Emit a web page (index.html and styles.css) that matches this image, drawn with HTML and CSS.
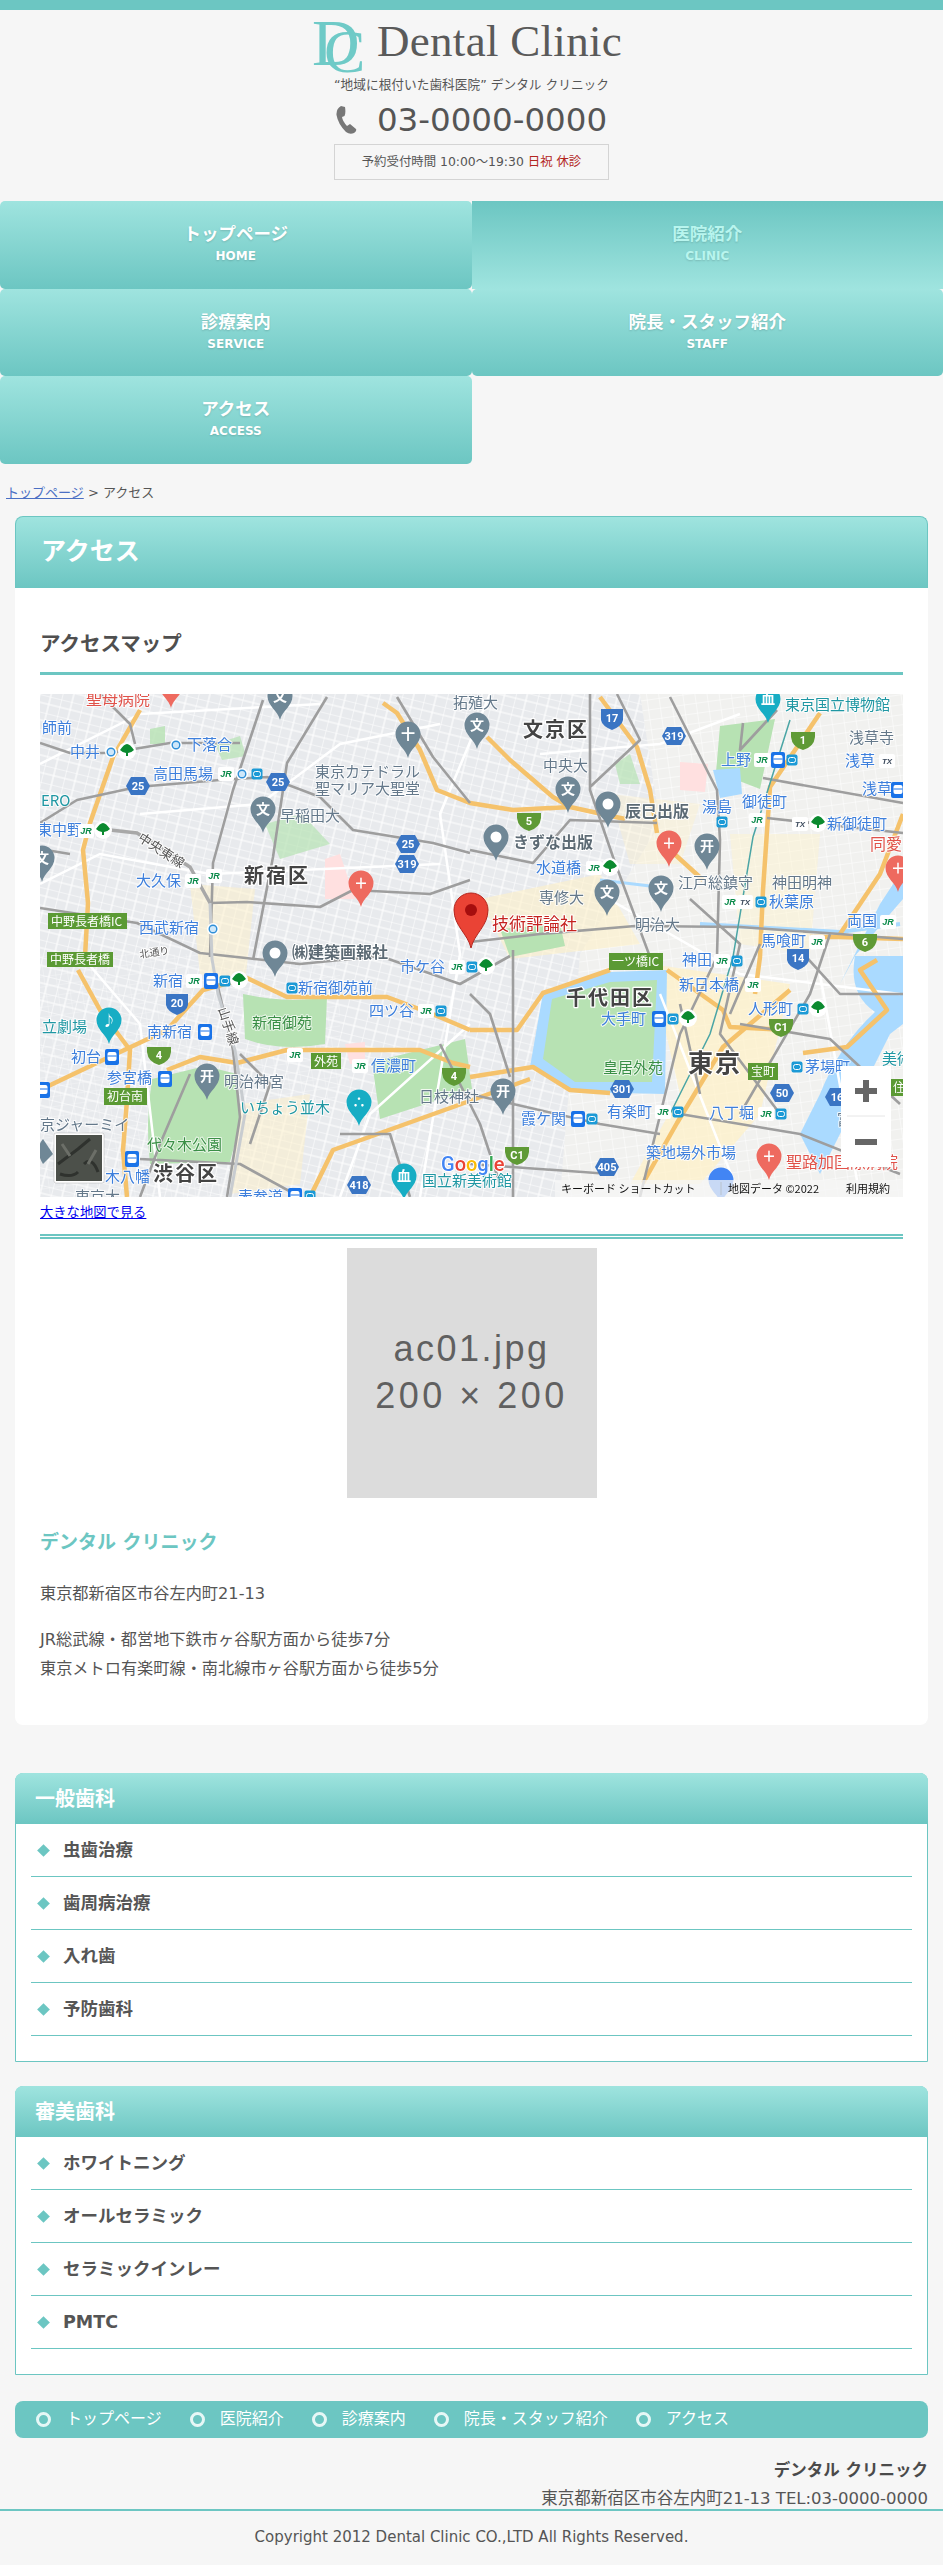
FILE: index.html
```html
<!DOCTYPE html>
<html lang="ja">
<head>
    <meta charset="UTF-8">
    <meta name="viewport" content="width=device-width, initial-scale=1.0">
    <title>アクセス | Dental Clinic</title>
    <link rel="stylesheet" href="styles.css">
</head>
<body>
    <header class="site-header">
        <a class="logo" href="#">
            <span class="logo-mark"><span class="logo-d">D</span><span class="logo-c">C</span></span>
            <span class="logo-name">Dental Clinic</span>
        </a>
        <p class="tagline">“地域に根付いた歯科医院” デンタル クリニック</p>
        <p class="phone">
            <svg class="phone-icon" viewBox="0 0 22 28"><path d="M5 0 L9 1 Q10 7 8.5 10 L6 11 Q6.5 15 11 20 L14 18 L20 23 Q21 25 18 27 Q14 29 10 26 Q2 18 .5 9 Q0 3 5 0Z"/></svg>
            <span>03-0000-0000</span>
        </p>
        <p class="hours">予約受付時間 10:00～19:30 <em>日祝 休診</em></p>
    </header>

    <nav class="global-nav">
        <a class="nav-item" href="#">トップページ<small>HOME</small></a>
        <a class="nav-item current" href="#">医院紹介<small>CLINIC</small></a>
        <a class="nav-item" href="#">診療案内<small>SERVICE</small></a>
        <a class="nav-item" href="#">院長・スタッフ紹介<small>STAFF</small></a>
        <a class="nav-item" href="#">アクセス<small>ACCESS</small></a>
    </nav>

    <p class="breadcrumb"><a href="#">トップページ</a> &gt; アクセス</p>

    <main class="wrapper">
        <section class="card">
            <h2 class="card-title">アクセス</h2>
            <div class="card-body">
                <h3 class="map-title">アクセスマップ</h3>

                <svg class="map" viewBox="0 0 863 503" xmlns="http://www.w3.org/2000/svg">
                    <defs>
                        <pattern id="streets" width="22" height="17" patternUnits="userSpaceOnUse" patternTransform="rotate(14)">
                            <path d="M0 0H22M0 8H22M0 0V17M11 0V17" fill="none" stroke="#fff" stroke-width="1.1"/>
                        </pattern>
                        <pattern id="streets-dense" width="12" height="10" patternUnits="userSpaceOnUse" patternTransform="rotate(-8)">
                            <path d="M0 0H12M0 0V10" fill="none" stroke="#fff" stroke-width="1"/>
                        </pattern>
                        <path id="pin" d="M0 0C-2-9-12.500-14-12.500-24A12.500 12.500 0 1 1 12.500-24C12.500-14 2-9 0 0Z"/>
                        <polygon id="hex" points="-12,0 -7,-9 7,-9 12,0 7,9 -7,9"/>
                        <path id="cup" d="M-12-8H12V-3Q11 7 0 10Q-11 7-12-3Z"/>
                        <g id="jr"><rect x="-8" y="-7" width="16" height="14" rx="2" fill="#fff"/><text class="jr-mark" y="3">JR</text></g>
                        <g id="tx"><rect x="-8" y="-7" width="16" height="14" rx="2" fill="#fff"/><text class="tx-mark" y="3">TX</text></g>
                        <g id="tree"><circle r="9" fill="#fff"/><path d="M-7-1Q-3-7 0-7Q3-7 7-1Q4 2 1 2V5H-1V2Q-4 2-7-1Z" fill="#0b8a2f"/></g>
                        <g id="metro"><rect x="-7" y="-8" width="14" height="16" rx="2" fill="#1a73e8"/><rect x="-4.500" y="-5" width="9" height="9" rx="2" fill="#fff"/><path d="M-4.500-1H4.500M-3 6L-4 7M3 6L4 7" stroke="#1a73e8"/></g>
                        <g id="sub"><rect x="-5.500" y="-5.500" width="11" height="11" rx="2" fill="#1c9ad6"/><rect x="-3.500" y="-2.500" width="7" height="5" rx="2" fill="none" stroke="#fff"/></g>
                        <g id="ring"><circle r="6" fill="#fff"/><circle r="3.800" fill="#cfe8fa" stroke="#2f8fd8" stroke-width="1.400"/></g>
                    </defs>

                    <!-- land, blocks -->
                    <rect width="863" height="503" fill="#e8eaed"/>
                    <rect width="863" height="503" fill="url(#streets)"/>
                    <path d="M600 0H863V503H520L540 260L620 130Z" fill="#f1f1ef"/>
                    <path d="M600 0H863V503H520L540 260L620 130Z" fill="url(#streets-dense)"/>
                    <path d="M0 260H300V400L180 503H0Z" fill="url(#streets-dense)" opacity=".5"/>

                    <!-- commercial areas -->
                    <g fill="#fff1c6" opacity=".7">
                        <path d="M610 270L750 290L720 420L660 490L590 490L640 400Z"/>
                        <path d="M150 190L215 195L205 290L160 280Z" opacity=".7"/>
                        <path d="M200 410L270 400L260 490L190 500Z" opacity=".7"/>
                        <path d="M440 205L560 180L600 250L470 265Z" opacity=".8"/>
                        <path d="M690 140L780 140L770 260L700 250Z" opacity=".6"/>
                        <path d="M570 100L660 110L640 170L590 170Z" opacity=".5"/>
                    </g>

                    <!-- parks and water -->
                    <g fill="#b7e2b3">
                        <path d="M203 300Q250 310 287 303L285 350Q240 358 205 345Z"/>
                        <path d="M112 385L165 372L197 380L200 430L190 468L110 470Q105 430 112 385Z"/>
                        <path d="M332 368L425 345L432 395L340 425Z"/>
                        <path d="M680 32L735 25L720 95L676 78Z"/>
                        <path d="M460 235L520 230L525 252L470 263Z"/>
                        <path d="M175 50L200 42L206 62L182 66Z" opacity=".7"/>
                        <path d="M225 130L262 120L290 150L240 165Z" opacity=".7"/>
                        <path d="M110 35L125 32L125 50L110 50Z" opacity=".8"/>
                        <path d="M575 70L590 60L600 90L580 90Z" opacity=".7"/>
                    </g>
                    <g fill="#ffe0e0">
                        <path d="M640 68L668 70L665 98L640 96Z"/>
                        <path d="M285 165L300 160L315 205L285 205Z"/>
                        <path d="M305 350L325 348L325 370L310 370Z"/>
                    </g>
                    <path d="M503 299L570 278L627 276L625 400L530 398L490 373Z" fill="#aadaff"/>
                    <path d="M512 305L570 288L617 286L612 388L535 388L503 365Z" fill="#b7e2b3"/>
                    <path d="M673 76L700 74L702 100L680 104Z" fill="#aadaff"/>
                    <path d="M863 262L815 262Q808 300 835 318Q800 350 780 400L760 440L780 480L820 400L850 340L863 330Z" fill="#aadaff"/>
                    <path d="M863 175L840 210L800 290L815 262L850 220L863 205Z" fill="#aadaff"/>
                    <path d="M660 230L800 238L860 230" fill="none" stroke="#aadaff" stroke-width="4"/>
                    <path d="M560 186L610 192" fill="none" stroke="#aadaff" stroke-width="3"/>

                    <!-- white roads -->
                    <g fill="none" stroke="#fff" stroke-width="2.500">
                        <path d="M0 70L100 20L280 10M0 190L60 160L170 180L400 170M100 120L220 110L300 50L400 30"/>
                        <path d="M450 0L400 120L420 260L380 503M300 503L330 420L430 330M40 260L100 330L120 503"/>
                        <path d="M500 60L620 50L700 20M560 200L700 280L860 300M620 300L700 503M780 280L820 503"/>
                    </g>

                    <!-- expressways -->
                    <g fill="none" stroke="#f5c26b" stroke-width="4.500" stroke-linejoin="round">
                        <path d="M100 16L73 63L50 129L43 156L48 209L45 263M38 276L60 316L90 356L87 406L83 456L87 503"/>
                        <path d="M343 9L357 19L380 56L397 96L430 109L473 116L530 113L585 125"/>
                        <path d="M447 43L470 66L513 103L530 113"/>
                        <path d="M560 3L580 30L597 53L610 96L617 139M630 156L663 186"/>
                        <path d="M780 19L730 93L723 196L720 263L715 300"/>
                        <path d="M430 336L477 336L503 299L570 276M627 276L683 316L690 333L747 336"/>
                        <path d="M430 383L493 373L530 396L570 399"/>
                        <path d="M0 396L63 366L127 336L163 296L207 284L247 303L347 303L390 319L430 336"/>
                        <path d="M127 376L160 363L197 369L247 356L380 356L413 369L430 373"/>
                        <path d="M270 503L293 456L413 413L490 385"/>
                        <path d="M603 489L637 429L683 353L750 296"/>
                        <path d="M837 266L820 276L847 316L807 353L763 359"/>
                        <path d="M863 245L800 243L770 243M863 120L840 180L800 240"/>
                    </g>

                    <!-- main roads -->
                    <g fill="none" stroke="#9e9e9e" stroke-width="2.600" stroke-linejoin="round">
                        <path d="M0 49L30 59L70 59L130 49L200 49"/>
                        <path d="M0 129L37 106L97 93L180 86L227 83L280 103L313 136L393 149L430 159"/>
                        <path d="M223 6L193 96L173 169L170 263M177 289L193 356L200 423L187 503"/>
                        <path d="M287 3L247 69L233 163L213 266"/>
                        <path d="M0 214L97 229L160 259L260 270L340 262L420 290L470 262"/>
                        <path d="M170 209L207 208L280 213L313 196L390 200L430 186"/>
                        <path d="M357 3L393 63L430 109M60 0L90 30L95 50"/>
                        <path d="M430 156L493 169L530 126L617 129M0 155L30 160"/>
                        <path d="M550 0L550 96L573 163L610 263M577 0L600 46L550 93"/>
                        <path d="M630 3L677 96L680 146L677 263L640 340L600 503"/>
                        <path d="M703 29L700 56L737 16M723 84L863 109M727 124L863 139"/>
                        <path d="M430 248L500 240L595 232L700 233L800 240L863 245"/>
                        <path d="M473 256V503M430 300L450 320L470 383M430 400L560 430L620 440M430 470L570 480"/>
                        <path d="M650 205L700 250L680 340L740 420M720 250L690 320M790 240L770 300L700 420"/>
                        <path d="M700 330L790 345L860 410M640 420L760 440L860 480M640 310L660 400"/>
                        <path d="M760 256L800 300L863 300M150 380L120 450L100 503M100 465L200 470L260 503"/>
                        <path d="M210 450L230 390L200 360M300 440L350 440L370 503M400 350L440 430L460 490"/>
                    </g>
                    <path d="M170 209L172 265L178 300L195 356L205 420L190 503" fill="none" stroke="#c8ccd0" stroke-width="3"/>
                    <path d="M70 136L97 139L150 173L170 209" fill="none" stroke="#a8a8a8" stroke-width="3.500"/>
                    <path d="M750 26L713 143L693 263L670 340L630 420" fill="none" stroke="#4aa5a5" stroke-width="1.500"/>

                    <!-- stations -->
                    <g class="station">
                        <text x="2" y="39">師前</text><text x="30" y="63">中井</text><text x="147" y="56">下落合</text>
                        <text x="113" y="85">高田馬場</text><text x="-3" y="141">東中野</text><text x="96" y="192">大久保</text>
                        <text x="99" y="239">西武新宿</text><text x="360" y="278">市ケ谷</text><text x="113" y="292">新宿</text>
                        <text x="258" y="299">新宿御苑前</text><text x="329" y="322">四ツ谷</text><text x="107" y="343">南新宿</text>
                        <text x="31" y="368">初台</text><text x="67" y="389">参宮橋</text><text x="331" y="377">信濃町</text>
                        <text x="65" y="488">木八幡</text><text x="198" y="508">表参道</text><text x="496" y="179">水道橋</text>
                        <text x="662" y="118">湯島</text><text x="702" y="113">御徒町</text><text x="681" y="71">上野</text>
                        <text x="805" y="72">浅草</text><text x="822" y="100">浅草</text><text x="787" y="135">新御徒町</text>
                        <text x="729" y="213">秋葉原</text><text x="807" y="232">両国</text><text x="721" y="252">馬喰町</text>
                        <text x="642" y="271">神田</text><text x="639" y="296">新日本橋</text><text x="561" y="330">大手町</text>
                        <text x="708" y="320">人形町</text><text x="765" y="378">茅場町</text><text x="481" y="430">霞ケ関</text>
                        <text x="567" y="423">有楽町</text><text x="669" y="424">八丁堀</text><text x="606" y="464">築地場外市場</text>
                    </g>

                    <g>
                        <use href="#ring" x="71" y="58"/><use href="#tree" x="87" y="57"/><use href="#ring" x="136" y="51"/>
                        <use href="#jr" x="186" y="80"/><use href="#ring" x="202" y="80"/><use href="#sub" x="217" y="80"/>
                        <use href="#jr" x="46" y="137"/><use href="#tree" x="63" y="136"/>
                        <use href="#jr" x="153" y="187"/><use href="#jr" x="174" y="182"/><use href="#ring" x="173" y="235"/>
                        <use href="#jr" x="417" y="273"/><use href="#sub" x="432" y="273"/><use href="#tree" x="446" y="272"/>
                        <use href="#jr" x="154" y="287"/><use href="#metro" x="171" y="287"/><use href="#sub" x="185" y="287"/><use href="#tree" x="199" y="286"/>
                        <use href="#sub" x="252" y="294"/><use href="#jr" x="386" y="317"/><use href="#sub" x="401" y="317"/>
                        <use href="#metro" x="165" y="338"/><use href="#metro" x="72" y="363"/><use href="#metro" x="125" y="385"/>
                        <use href="#metro" x="3" y="396"/><use href="#metro" x="92" y="465"/><use href="#jr" x="255" y="361"/>
                        <use href="#jr" x="320" y="372"/><use href="#metro" x="255" y="502"/><use href="#sub" x="270" y="502"/>
                        <use href="#jr" x="722" y="66"/><use href="#metro" x="738" y="66"/><use href="#sub" x="752" y="66"/>
                        <use href="#tx" x="847" y="67"/><use href="#metro" x="858" y="96"/><use href="#sub" x="682" y="128"/>
                        <use href="#jr" x="717" y="126"/><use href="#tx" x="760" y="130"/><use href="#tree" x="778" y="129"/>
                        <use href="#jr" x="554" y="174"/><use href="#tree" x="570" y="173"/>
                        <use href="#jr" x="690" y="208"/><use href="#tx" x="705" y="208"/><use href="#sub" x="721" y="208"/>
                        <use href="#jr" x="848" y="228"/><use href="#jr" x="777" y="248"/><use href="#jr" x="682" y="267"/><use href="#sub" x="697" y="267"/>
                        <use href="#jr" x="713" y="291"/><use href="#sub" x="763" y="315"/><use href="#tree" x="778" y="314"/>
                        <use href="#metro" x="619" y="325"/><use href="#sub" x="633" y="325"/><use href="#tree" x="648" y="324"/>
                        <use href="#sub" x="757" y="373"/><use href="#metro" x="538" y="425"/><use href="#sub" x="552" y="425"/>
                        <use href="#jr" x="623" y="418"/><use href="#sub" x="638" y="418"/><use href="#jr" x="726" y="420"/><use href="#sub" x="741" y="420"/>
                    </g>

                    <!-- landmarks -->
                    <g class="landmark">
                        <text x="275" y="83">東京カテドラル</text><text x="275" y="100">聖マリア大聖堂</text><text x="240" y="127">早稲田大</text>
                        <text x="413" y="14">拓殖大</text><text x="503" y="77">中央大</text><text x="499" y="209">専修大</text>
                        <text x="638" y="194">江戸総鎮守</text><text x="732" y="194">神田明神</text><text x="595" y="236">明治大</text>
                        <text x="809" y="49">浅草寺</text><text x="184" y="393">明治神宮</text><text x="379" y="408">日枝神社</text>
                        <text x="0" y="436">京ジャーミイ</text><text x="35" y="508">東京大</text><text x="797" y="431">富</text>
                    </g>
                    <g class="teal-label">
                        <text x="745" y="16">東京国立博物館</text><text x="1" y="112">ERO</text><text x="2" y="338">立劇場</text>
                        <text x="200" y="419">いちょう並木</text><text x="382" y="492">国立新美術館</text><text x="842" y="370">美術</text>
                    </g>
                    <g class="park-label">
                        <text x="212" y="334">新宿御苑</text><text x="107" y="456">代々木公園</text><text x="563" y="379">皇居外苑</text>
                    </g>
                    <g class="place-name">
                        <text x="473" y="154">きずな出版</text><text x="585" y="123">辰巳出版</text><text x="252" y="264">㈱建築画報社</text>
                    </g>
                    <g class="ward">
                        <text x="204" y="189">新宿区</text><text x="483" y="43">文京区</text><text x="526" y="311">千代田区</text><text x="113" y="487">渋谷区</text>
                    </g>
                    <text class="ward tokyo" x="648" y="378">東京</text>
                    <g class="hospital-label">
                        <text x="830" y="156">同愛</text><text x="746" y="474">聖路加国際病院</text>
                    </g>
                    <text class="hospital-label top" x="46" y="11">聖母病院</text>
                    <text class="rail-label" transform="translate(97 146) rotate(33)">中央東線</text>
                    <text class="rail-label" transform="translate(178 315) rotate(72)">山手線</text>
                    <text class="rail-label small" transform="translate(100 264) rotate(-8)">北通り</text>

                    <!-- green signs -->
                    <g class="sign">
                        <rect x="8" y="219" width="79" height="16"/><rect x="7" y="258" width="66" height="15"/>
                        <rect x="64" y="394" width="43" height="17"/><rect x="271" y="359" width="30" height="16"/>
                        <rect x="569" y="259" width="54" height="17"/><rect x="708" y="369" width="30" height="17"/><rect x="851" y="385" width="12" height="17"/>
                    </g>
                    <g class="sign-text">
                        <text x="11" y="232">中野長者橋IC</text><text x="10" y="270">中野長者橋</text><text x="67" y="407">初台南</text>
                        <text x="274" y="372">外苑</text><text x="572" y="272">一ツ橋IC</text><text x="711" y="382">宝町</text><text x="853" y="398">住</text>
                    </g>

                    <!-- route shields -->
                    <g class="route">
                        <use href="#hex" x="98" y="92"/><use href="#hex" x="238" y="88"/><use href="#hex" x="368" y="150"/><use href="#hex" x="367" y="170"/>
                        <use href="#hex" x="634" y="42"/><use href="#hex" x="582" y="395"/><use href="#hex" x="742" y="399"/><use href="#hex" x="797" y="403"/>
                        <use href="#hex" x="567" y="473"/><use href="#hex" x="319" y="491"/>
                        <path d="M561 15H583V26Q582 32 572 36Q562 32 561 26Z"/><path d="M126 300H148V311Q147 317 137 321Q127 317 126 311Z"/><path d="M747 255H769V266Q768 272 758 276Q748 272 747 266Z"/>
                    </g>
                    <g class="route-num">
                        <text x="98" y="96">25</text><text x="238" y="92">25</text><text x="368" y="154">25</text><text x="367" y="174">319</text>
                        <text x="634" y="46">319</text><text x="582" y="399">301</text><text x="742" y="403">50</text><text x="797" y="407">16</text>
                        <text x="567" y="477">405</text><text x="319" y="495">418</text><text x="572" y="28">17</text><text x="137" y="313">20</text><text x="758" y="268">14</text>
                    </g>
                    <g class="route-green">
                        <use href="#cup" x="489" y="127"/><use href="#cup" x="763" y="46"/><use href="#cup" x="825" y="248"/>
                        <use href="#cup" x="119" y="361"/><use href="#cup" x="414" y="382"/><use href="#cup" x="741" y="333"/><use href="#cup" x="477" y="461"/>
                    </g>
                    <g class="route-num">
                        <text x="489" y="131">5</text><text x="763" y="50">1</text><text x="825" y="252">6</text>
                        <text x="119" y="365">4</text><text x="414" y="386">4</text><text x="741" y="337">C1</text><text x="477" y="465">C1</text>
                    </g>

                    <!-- pins -->
                    <g class="pin-grey">
                        <g transform="translate(240 26)"><use href="#pin"/><text y="-19">文</text></g>
                        <g transform="translate(368 64)"><use href="#pin"/><text y="-19">十</text></g>
                        <g transform="translate(223 139)"><use href="#pin"/><text y="-19">文</text></g>
                        <g transform="translate(2 188)"><use href="#pin"/><text y="-19">文</text></g>
                        <g transform="translate(437 55)"><use href="#pin"/><text y="-19">文</text></g>
                        <g transform="translate(528 119)"><use href="#pin"/><text y="-19">文</text></g>
                        <g transform="translate(567 222)"><use href="#pin"/><text y="-19">文</text></g>
                        <g transform="translate(621 218)"><use href="#pin"/><text y="-19">文</text></g>
                        <g transform="translate(167 406)"><use href="#pin"/><text y="-19">开</text></g>
                        <g transform="translate(667 176)"><use href="#pin"/><text y="-19">开</text></g>
                        <g transform="translate(463 421)"><use href="#pin"/><text y="-19">开</text></g>
                        <g transform="translate(568 134)"><use href="#pin"/><circle cy="-24" r="5.500" fill="#fff"/></g>
                        <g transform="translate(456 167)"><use href="#pin"/><circle cy="-24" r="5.500" fill="#fff"/></g>
                        <g transform="translate(235 283)"><use href="#pin"/><circle cy="-24" r="5.500" fill="#fff"/></g>
                        <path d="M3 470Q-6 455 3 445L13 460Z"/>
                    </g>
                    <g class="pin-red">
                        <g transform="translate(131 14)"><use href="#pin"/></g>
                        <g transform="translate(321 213)"><use href="#pin"/><text y="-19">＋</text></g>
                        <g transform="translate(629 173)"><use href="#pin"/><text y="-19">＋</text></g>
                        <g transform="translate(858 198)"><use href="#pin"/><text y="-19">＋</text></g>
                        <g transform="translate(729 486)"><use href="#pin"/><text y="-19">＋</text></g>
                    </g>
                    <g class="pin-teal">
                        <g transform="translate(728 29)"><use href="#pin"/><text y="-19">血</text></g>
                        <g transform="translate(69 350)"><use href="#pin"/><text y="-19">♪</text></g>
                        <g transform="translate(319 432)"><use href="#pin"/><text y="-19">∴</text></g>
                        <g transform="translate(364 506)"><use href="#pin"/><text y="-19">血</text></g>
                    </g>
                    <g transform="translate(681 510)"><use href="#pin" fill="#4285f4"/></g>

                    <!-- selected place -->
                    <path d="M431 254C428 240 414 232 414 216A17 17 0 1 1 448 216C448 232 434 240 431 254Z" fill="#ea4335" stroke="#b3261e"/>
                    <circle cx="431" cy="216" r="6" fill="#a50e0e"/>
                    <text class="selected-label" x="452" y="236">技術評論社</text>

                    <!-- map chrome -->
                    <rect x="14" y="439" width="50" height="50" rx="2" fill="#fff" stroke="#00000022"/>
                    <rect x="16" y="441" width="46" height="46" fill="#4c504a"/>
                    <path d="M18 470L38 455L50 445M44 470Q52 462 58 478M20 480Q32 484 38 478" fill="none" stroke="#2f322e" stroke-width="3"/>
                    <path d="M22 450L30 462M48 470L56 456" fill="none" stroke="#6c6f68" stroke-width="3"/>
                    <text class="google" x="401" y="477"><tspan fill="#4285f4">G</tspan><tspan fill="#ea4335">o</tspan><tspan fill="#fbbc05">o</tspan><tspan fill="#4285f4">g</tspan><tspan fill="#34a853">l</tspan><tspan fill="#ea4335">e</tspan></text>

                    <rect x="801" y="372" width="50" height="101" fill="#fff"/>
                    <path d="M807 422H845" stroke="#e6e6e6"/>
                    <path d="M815 394H837V400H815ZM823 386H829V408H823ZM815 445H837V451H815Z" fill="#666"/>

                    <rect x="515" y="486" width="348" height="17" fill="#f5f5f5" opacity=".75"/>
                    <path d="M681 488V501" stroke="#b9c2cc"/>
                    <g class="attribution">
                        <text x="521" y="499">キーボード ショートカット</text><text x="688" y="499">地図データ ©2022</text><text x="806" y="499">利用規約</text>
                    </g>
                </svg>

                <a class="map-link" href="#">大きな地図で見る</a>
                <hr class="double-rule">

                <div class="photo"><span class="photo-name">ac01.jpg</span><span class="photo-size">200 × 200</span></div>

                <h4 class="clinic-name">デンタル クリニック</h4>
                <p class="address">東京都新宿区市谷左内町21-13</p>
                <p class="directions">JR総武線・都営地下鉄市ヶ谷駅方面から徒歩7分<br>東京メトロ有楽町線・南北線市ヶ谷駅方面から徒歩5分</p>
            </div>
        </section>

        <section class="side-box first">
            <h3 class="side-title">一般歯科</h3>
            <ul class="side-list">
                <li>虫歯治療</li>
                <li>歯周病治療</li>
                <li>入れ歯</li>
                <li>予防歯科</li>
            </ul>
        </section>

        <section class="side-box">
            <h3 class="side-title">審美歯科</h3>
            <ul class="side-list">
                <li>ホワイトニング</li>
                <li>オールセラミック</li>
                <li>セラミックインレー</li>
                <li>PMTC</li>
            </ul>
        </section>

        <ul class="foot-nav">
            <li>トップページ</li>
            <li>医院紹介</li>
            <li>診療案内</li>
            <li>院長・スタッフ紹介</li>
            <li>アクセス</li>
        </ul>
    </main>

    <footer class="site-footer">
        <div class="foot-info">
            <strong>デンタル クリニック</strong>
            <p>東京都新宿区市谷左内町21-13 TEL:03-0000-0000</p>
        </div>
        <p class="copyright">Copyright 2012 Dental Clinic CO.,LTD All Rights Reserved.</p>
    </footer>
</body>
</html>
```

FILE: styles.css
```css
* {
    margin: 0;
    padding: 0;
    box-sizing: border-box;
}

body {
    font-family: "DejaVu Sans", "Noto Sans CJK JP", sans-serif;
    background: #f6f6f6;
    color: #555;
    font-size: 16px;
}

ul {
    list-style: none;
}

/* Header */
.site-header {
    border-top: 10px solid #6cc6c2;
    height: 201px;
    display: flex;
    flex-direction: column;
    align-items: center;
}

.logo {
    display: flex;
    align-items: flex-start;
    height: 57px;
    margin: 5px 0 0 -9px;
    color: #5a5a5a;
    text-decoration: none;
}

.logo-mark {
    position: relative;
    width: 65px;
    height: 57px;
    font-family: "Liberation Serif", serif;
    color: #6fcac7;
}

.logo-d,
.logo-c {
    position: absolute;
    font-size: 66px;
    line-height: 60px;
}

.logo-d {
    left: 0;
    top: -2px;
}

.logo-c {
    left: 12px;
    top: 6px;
    font-size: 62px;
}

.logo-name {
    font-family: "Liberation Serif", serif;
    font-size: 45px;
    line-height: 52px;
    letter-spacing: .3px;
}

.tagline {
    font-size: 12.700px;
    line-height: 20px;
    margin-top: 3px;
}

.phone {
    display: flex;
    align-items: center;
    gap: 19px;
    height: 40px;
    margin-top: 5px;
    font-size: 32.500px;
    line-height: 40px;
}

.phone-icon {
    width: 22px;
    height: 28px;
    fill: #777;
}

.hours {
    width: 275px;
    height: 36px;
    margin-top: 4px;
    border: 1px solid #d4d4d4;
    font-size: 12.400px;
    line-height: 34px;
    text-align: center;
}

.hours em {
    font-style: normal;
    color: #b3261e;
}

/* Global nav */
.global-nav {
    display: grid;
    grid-template-columns: 1fr 1fr;
    grid-auto-rows: 87.500px;
}

.nav-item {
    display: block;
    padding-top: 22px;
    border-radius: 5px;
    background: linear-gradient(#9fe4df, #6cc6c2);
    color: #fff;
    font-size: 17.500px;
    font-weight: bold;
    line-height: 22px;
    text-align: center;
    text-decoration: none;
    text-shadow: 0 1px 2px rgba(0, 0, 0, .15);
}

.nav-item small {
    display: block;
    font-size: 12px;
    line-height: 22px;
}

.nav-item.current {
    border-radius: 0;
    background: linear-gradient(#6cc6c2, #9fe4df);
    color: #b8f5ee;
}

/* Breadcrumb */
.breadcrumb {
    height: 52px;
    padding: 20px 6px 0;
    font-size: 13px;
    line-height: 18px;
}

.breadcrumb a {
    color: #4a6fc4;
}

/* Main */
.wrapper {
    margin: 0 15px;
}

.card {
    height: 1209px;
    border-radius: 8px;
    background: #fff;
}

.card-title {
    height: 72px;
    padding-left: 25px;
    border: 1px solid #6cc6c2;
    border-bottom: 0;
    border-radius: 8px 8px 0 0;
    background: linear-gradient(#9fe4df, #6cc6c2);
    color: #fff;
    font-size: 25px;
    line-height: 70px;
}

.card-body {
    padding: 0 25px;
}

.map-title {
    height: 87px;
    padding-top: 41px;
    border-bottom: 3px solid #6cc6c2;
    font-size: 20.500px;
    line-height: 30px;
    color: #4f4f4f;
}

.map {
    display: block;
    width: 863px;
    height: 503px;
    margin-top: 19px;
    font-family: "Noto Sans CJK JP", sans-serif;
}

.map-link {
    display: block;
    margin-top: 7px;
    font-size: 13.300px;
    line-height: 18px;
    color: #00e;
}

.double-rule {
    height: 5px;
    margin-top: 12px;
    border: 0;
    border-bottom: 5px double #6cc6c2;
}

.photo {
    display: flex;
    flex-direction: column;
    justify-content: center;
    width: 250px;
    height: 250px;
    margin: 9px auto 0;
    padding-bottom: 1px;
    background: #dcdcdc;
    color: #606060;
    font-family: "Liberation Sans", sans-serif;
    font-size: 36px;
    line-height: 47px;
    text-align: center;
}

.photo-name {
    letter-spacing: 2.500px;
}

.photo-size {
    letter-spacing: 3.500px;
}

.clinic-name {
    margin-top: 30px;
    color: #6cc6c2;
    font-size: 19px;
    line-height: 28px;
}

.address {
    margin-top: 23px;
    font-size: 16.200px;
    line-height: 29px;
}

.directions {
    margin-top: 17px;
    font-size: 16.200px;
    line-height: 29px;
}

/* Side boxes */
.side-box {
    height: 289px;
    margin-top: 24px;
    border: 1px solid #6cc6c2;
    border-radius: 8px 8px 0 0;
    background: #fff;
}

.side-box.first {
    margin-top: 48px;
}

.side-title {
    height: 51px;
    margin: -1px -1px 0;
    padding-left: 20px;
    border-radius: 8px 8px 0 0;
    background: linear-gradient(#9fe4df, #6cc6c2);
    color: #fff;
    font-size: 20px;
    line-height: 53px;
}

.side-list {
    margin: 0 15px;
}

.side-list li {
    height: 53px;
    padding-left: 32px;
    border-bottom: 1px solid #6cc6c2;
    position: relative;
    color: #555;
    font-size: 17.500px;
    font-weight: bold;
    line-height: 52px;
}

.side-list li::before {
    content: "";
    position: absolute;
    left: 8px;
    top: 22px;
    width: 9px;
    height: 9px;
    background: #6cc6c2;
    transform: rotate(45deg);
}

/* Footer nav */
.foot-nav {
    display: flex;
    gap: 28px;
    height: 37px;
    margin-top: 26px;
    padding-left: 21px;
    border-radius: 8px;
    background: #6cc6c2;
    color: #fff;
    line-height: 36px;
}

.foot-nav li {
    display: flex;
    align-items: center;
    gap: 15px;
}

.foot-nav li::before {
    content: "";
    width: 9px;
    height: 9px;
    border: 3px solid #e6f7f6;
    border-radius: 50%;
}

/* Footer */
.foot-info {
    height: 73px;
    padding: 19px 15px 0 0;
    border-bottom: 2px solid #6cc6c2;
    font-size: 16.500px;
    text-align: right;
    line-height: 28px;
}

.foot-info strong {
    display: block;
    color: #4a4a4a;
}

.copyright {
    font-size: 15px;
    line-height: 52px;
    text-align: center;
}

/* Map labels */
.map text {
    paint-order: stroke;
    stroke-linejoin: round;
}

.station text {
    fill: #3d7fdc;
    font-size: 15px;
    stroke: #fff;
    stroke-width: 2px;
    stroke-opacity: .8;
}

.landmark text {
    fill: #64788a;
    font-size: 15px;
    stroke: #fff;
    stroke-width: 2px;
    stroke-opacity: .8;
}

.teal-label text {
    fill: #1f97a3;
    font-size: 15px;
    stroke: #fff;
    stroke-width: 2px;
    stroke-opacity: .8;
}

.park-label text {
    fill: #3a8f46;
    font-size: 15px;
    stroke: #fff;
    stroke-width: 2px;
    stroke-opacity: .7;
}

.place-name text {
    fill: #5c6a74;
    font-size: 16px;
    font-weight: bold;
    stroke: #fff;
    stroke-width: 2px;
}

.ward text,
text.ward {
    fill: #444;
    font-size: 20px;
    font-weight: bold;
    letter-spacing: 2px;
    stroke: #fff;
    stroke-width: 2.500px;
}

text.tokyo {
    font-size: 25px;
}

.hospital-label text,
text.hospital-label {
    fill: #e0524a;
    font-size: 16px;
    stroke: #fff;
    stroke-width: 2px;
    stroke-opacity: .8;
}

.rail-label {
    fill: #555;
    font-size: 13px;
    stroke: #fff;
    stroke-width: 2px;
}

.rail-label.small {
    font-size: 10px;
}

.sign rect {
    fill: #5b9a34;
}

.sign-text text {
    fill: #fff;
    font-size: 12px;
}

.route use,
.route path {
    fill: #3a75c4;
}

.route-green use {
    fill: #5f9a36;
}

.route-num text {
    fill: #fff;
    font-family: "Roboto", sans-serif;
    font-size: 11px;
    font-weight: bold;
    text-anchor: middle;
}

.jr-mark {
    fill: #0b8a4a;
    font-family: "Liberation Sans", sans-serif;
    font-size: 9px;
    font-style: italic;
    font-weight: bold;
    text-anchor: middle;
}

.tx-mark {
    fill: #3c4a5c;
    font-family: "Liberation Sans", sans-serif;
    font-size: 8px;
    font-style: italic;
    font-weight: bold;
    text-anchor: middle;
}

.pin-grey {
    fill: #6f8796;
}

.pin-red {
    fill: #ee6a5f;
}

.pin-teal {
    fill: #17adc4;
}

.pin-grey text,
.pin-red text,
.pin-teal text {
    fill: #fff;
    font-size: 14px;
    font-weight: bold;
    text-anchor: middle;
}

.selected-label {
    fill: #c5221f;
    font-size: 17px;
    stroke: #fff;
    stroke-width: 2px;
}

.google {
    font-family: "Roboto", sans-serif;
    font-size: 20px;
    font-weight: 500;
    stroke: #fff;
    stroke-width: 2px;
}

.attribution text {
    fill: #111;
    font-size: 11px;
}
```
